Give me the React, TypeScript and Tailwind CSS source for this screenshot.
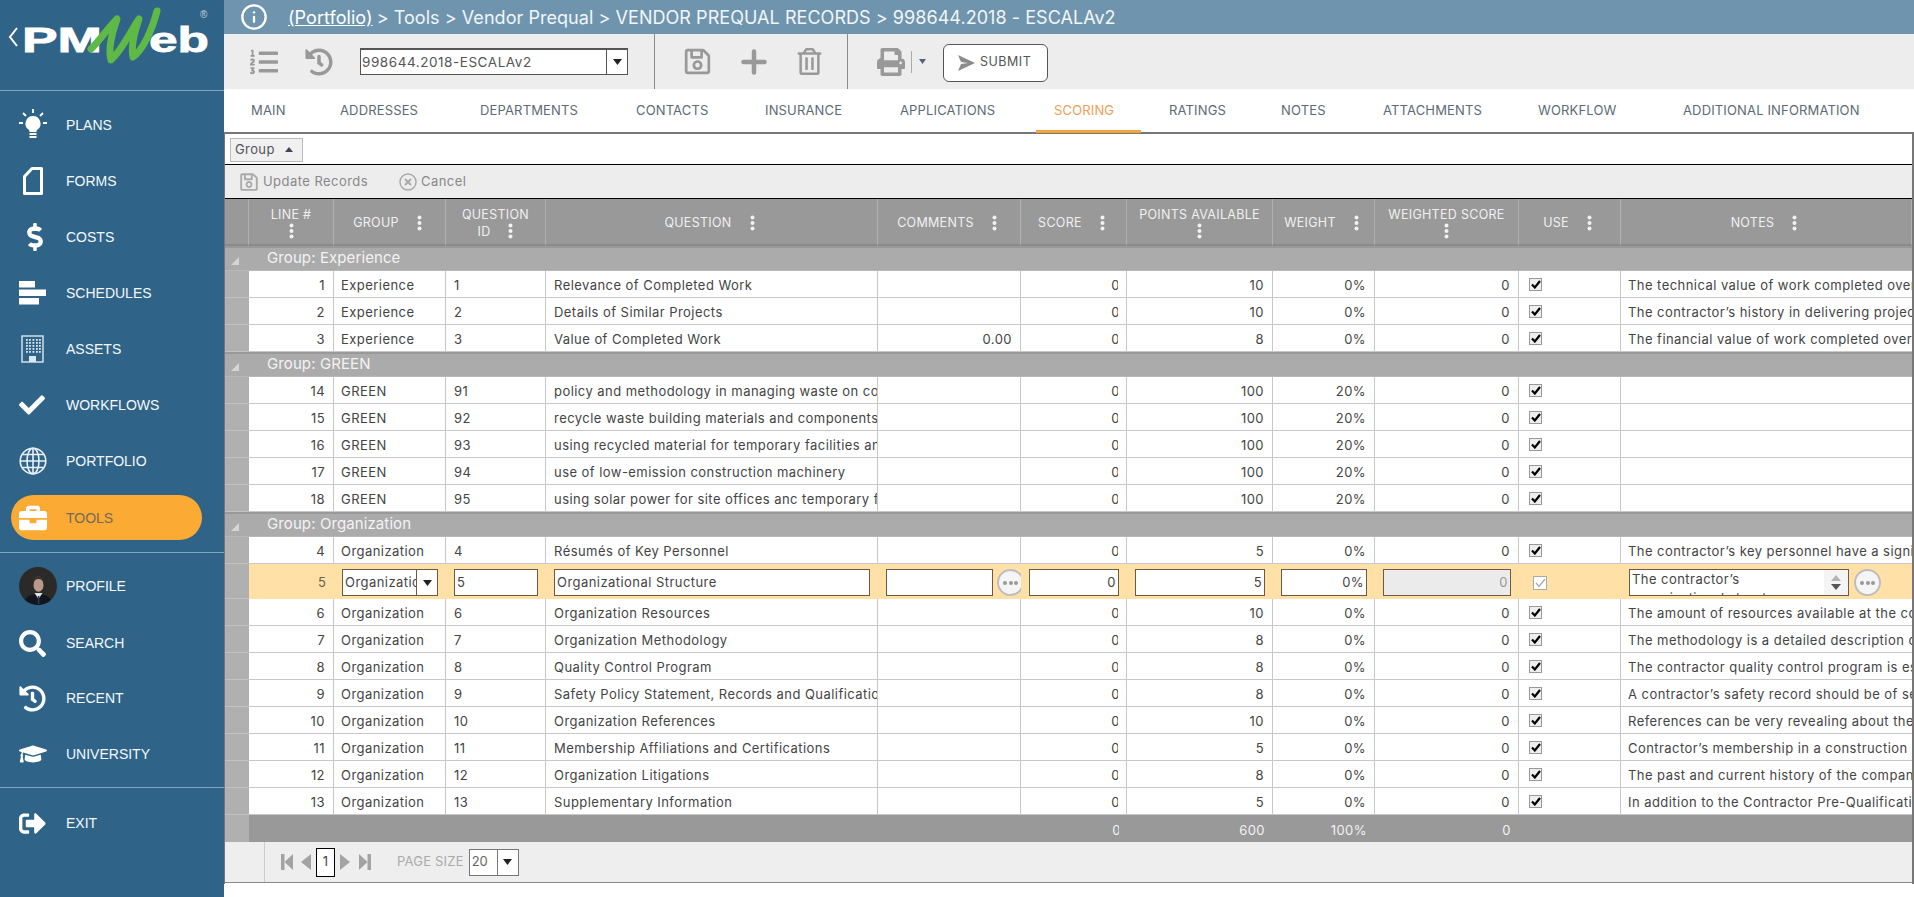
import React from "react";
import { Info, Plus } from "lucide-react";
import {
  FaBriefcase, FaCheck, FaDollarSign, FaGraduationCap, FaHistory, FaListOl, FaPrint,
  FaRegSave, FaRegTrashAlt, FaSearch, FaSignOutAlt,
} from "react-icons/fa";

const Kebab = ({ className = "" }: { className?: string }) => (
  <svg width="5" height="16" viewBox="0 0 5 16" className={className}>
    <circle cx="2.5" cy="2.5" r="2" fill="#f2f2f2" />
    <circle cx="2.5" cy="8" r="2" fill="#f2f2f2" />
    <circle cx="2.5" cy="13.5" r="2" fill="#f2f2f2" />
  </svg>
);

const Logo = () => (
  <svg width="224" height="90" viewBox="0 0 224 90">
    <path d="M17 28 L10 37 L17 46" fill="none" stroke="#fff" strokeWidth="2" />
    <text x="22" y="52" fontFamily="Liberation Sans" fontWeight="700" fontSize="35" fill="#fff" stroke="#fff" strokeWidth="0.8" textLength="80" lengthAdjust="spacingAndGlyphs">PM</text>
    <text x="149" y="52" fontFamily="Liberation Sans" fontWeight="700" fontSize="35" fill="#fff" stroke="#fff" strokeWidth="0.8" textLength="60" lengthAdjust="spacingAndGlyphs">eb</text>
    <path d="M91 49 C100 40 108 28 117 19 C111 36 108 50 111 60 C122 50 130 32 139 19 C134 33 131 47 133 57 C143 50 152 30 157 11" fill="none" stroke="#5fb946" strokeWidth="7" strokeLinecap="round" strokeLinejoin="round" />
    <text x="200" y="18" fontFamily="Liberation Sans" fontSize="10" fill="#c5d3dd">®</text>
  </svg>
);

const Bulb = () => (
  <svg width="28" height="32" viewBox="0 0 28 32" fill="#fff">
    <path d="M14 7a7.5 7.5 0 0 0-4.5 13.5c.8.7 1 1.500 1 2.500h7c0-1 .2-1.800 1-2.500A7.500 7.500 0 0 0 14 7z" />
    <rect x="10.500" y="24" width="7" height="2" />
    <rect x="10.500" y="27" width="7" height="2" />
    <path d="M14 0v4M4 4l3 3M24 4l-3 3M0 14h4M24 14h4" stroke="#fff" strokeWidth="1.800" />
  </svg>
);
const Forms = () => (
  <svg width="22" height="30" viewBox="0 0 22 30" fill="none" stroke="#fff" strokeWidth="3">
    <path d="M10 2.500H19.500V27.500H2.500V10.500Z" strokeLinejoin="round" />
  </svg>
);
const Sched = () => (
  <svg width="28" height="24" viewBox="0 0 28 24" fill="#fff">
    <rect x="0" y="0" width="16" height="6.500" />
    <rect x="0" y="8.500" width="27" height="6.500" />
    <rect x="0" y="17" width="20" height="6.500" />
  </svg>
);
const Building = () => (
  <svg width="23" height="28" viewBox="0 0 23 28">
    <rect x="1" y="1" width="21" height="26" fill="none" stroke="#cfe0ea" strokeWidth="1.500" />
    {[4, 7, 10, 13, 16].map((y) => [5, 8, 11.500, 15, 18].map((x) => <rect key={x + "-" + y} x={x} y={y} width="1.800" height="1.800" fill="#dbe7ef" />))}
    <rect x="8" y="21" width="7" height="6" fill="#dbe7ef" />
  </svg>
);
const Globe = () => (
  <svg width="28" height="28" viewBox="0 0 28 28" fill="none" stroke="#e8f0f5" strokeWidth="1.600">
    <circle cx="14" cy="14" r="12.800" />
    <ellipse cx="14" cy="14" rx="6" ry="12.800" />
    <path d="M14 1v26M1.200 14h25.600M3 7.500h22M3 20.500h22" />
  </svg>
);
const Avatar = () => (
  <svg width="38" height="38" viewBox="0 0 38 38">
    <defs><clipPath id="av"><circle cx="19" cy="19" r="19" /></clipPath></defs>
    <g clipPath="url(#av)">
      <rect width="38" height="38" fill="#2c2a28" />
      <path d="M4 38c1-8 8-11 15-11s14 3 15 11z" fill="#12151c" />
      <path d="M15.500 26l4 6 4-6z" fill="#dfe3e8" />
      <rect x="18.800" y="29" width="1.600" height="8" fill="#2b3560" />
      <ellipse cx="19.500" cy="18" rx="5" ry="6.800" fill="#b99a8a" />
      <path d="M14 16c0-5 2.500-7 5.500-7s5.500 2 5.500 7c-1-3-3-4-5.500-4s-4.500 1-5.500 4z" fill="#3a3431" />
    </g>
  </svg>
);

const NavItem = ({ icon, label, h }: { icon: React.ReactNode; label: string; h: string }) => (
  <div className={"flex items-center shrink-0 " + h}>
    <div className="w-[66px] flex justify-start pl-[19px] text-white shrink-0">{icon}</div>
    <span className="text-[14px] text-[#f4f8fb]">{label}</span>
  </div>
);

const Sidebar = () => (
  <aside className="w-[224px] shrink-0 h-full bg-[#2f6488] flex flex-col font-['Liberation_Sans',Arial,sans-serif]">
    <div className="h-[91px] border-b border-[#7ea6c2] shrink-0"><Logo /></div>
    <div className="h-[6px] shrink-0" />
    <NavItem h="h-[56px]" label="PLANS" icon={<Bulb />} />
    <NavItem h="h-[56px]" label="FORMS" icon={<div className="pl-[3px]"><Forms /></div>} />
    <NavItem h="h-[56px]" label="COSTS" icon={<div className="pl-[2px]"><FaDollarSign size={28} /></div>} />
    <NavItem h="h-[56px]" label="SCHEDULES" icon={<Sched />} />
    <NavItem h="h-[56px]" label="ASSETS" icon={<div className="pl-[2px]"><Building /></div>} />
    <NavItem h="h-[56px]" label="WORKFLOWS" icon={<FaCheck size={26} />} />
    <NavItem h="h-[56px]" label="PORTFOLIO" icon={<Globe />} />
    <div className="mt-[6px] ml-[11px] w-[191px] h-[45px] rounded-full bg-[#fbaa33] flex items-center shrink-0">
      <div className="w-[55px] pl-[8px] text-white"><FaBriefcase size={28} /></div>
      <span className="text-[14px] text-[#75695a] pt-[2px]">TOOLS</span>
    </div>
    <div className="mt-[12px] border-b border-[#7ea6c2] shrink-0" />
    <div className="h-[5px] shrink-0" />
    <div className="flex items-center h-[56px] shrink-0">
      <div className="w-[66px] pl-[19px] shrink-0"><Avatar /></div>
      <span className="text-[14px] text-[#f4f8fb]">PROFILE</span>
    </div>
    <NavItem h="h-[58px]" label="SEARCH" icon={<FaSearch size={27} />} />
    <NavItem h="h-[53px]" label="RECENT" icon={<FaHistory size={27} />} />
    <NavItem h="h-[58px]" label="UNIVERSITY" icon={<FaGraduationCap size={28} />} />
    <div className="mt-[4px] border-b border-[#7ea6c2] shrink-0" />
    <NavItem h="h-[71px]" label="EXIT" icon={<FaSignOutAlt size={27} />} />
  </aside>
);

const tabs: { label: string; box: string; active?: boolean }[] = [
  { label: "MAIN", box: "w-[116px] pl-[27px]" },
  { label: "ADDRESSES", box: "w-[140px]" },
  { label: "DEPARTMENTS", box: "w-[156px]" },
  { label: "CONTACTS", box: "w-[129px]" },
  { label: "INSURANCE", box: "w-[135px]" },
  { label: "APPLICATIONS", box: "w-[136px]" },
  { label: "SCORING", box: "w-[105px] pl-[18px]", active: true },
  { label: "RATINGS", box: "w-[140px] pl-[28px]" },
  { label: "NOTES", box: "w-[102px]" },
  { label: "ATTACHMENTS", box: "w-[155px]" },
  { label: "WORKFLOW", box: "w-[145px]" },
  { label: "ADDITIONAL INFORMATION", box: "w-[200px]" },
];

const Tabs = () => (
  <div className="h-[45px] shrink-0 flex bg-white border-b-2 border-[#777] text-[13px] tracking-[0.15px] text-[#5c6b76]">
    {tabs.map((t) => (
      <div key={t.label} className={"h-[44px] flex items-center whitespace-nowrap border-b-[3px] pt-[2px] " + t.box + (t.active ? " border-[#f0a63c] text-[#ee9f55]" : " border-transparent")}>{t.label}</div>
    ))}
  </div>
);

const Toolbar = () => (
  <div className="h-[55px] shrink-0 bg-[#ededed] flex items-center text-[#999]">
    <div className="w-[431px] h-full flex items-center border-r border-[#8a8a8a] shrink-0">
      <div className="ml-[26px] w-[55px]"><FaListOl size={28} /></div>
      <FaHistory size={28} />
      <div className="ml-[27px] w-[268px] h-[27px] flex bg-white border border-[#555] border-t-2 text-[13.500px] text-[#555]">
        <div className="flex-1 flex items-center pl-[1px] tracking-[0.55px]">998644.2018-ESCALAv2</div>
        <div className="w-[21px] border-l border-[#555] flex items-center justify-center">
          <svg width="9" height="6" viewBox="0 0 9 6"><path d="M0 0h9L4.500 6z" fill="#222" /></svg>
        </div>
      </div>
    </div>
    <div className="w-[193px] h-full flex items-center border-r border-[#8a8a8a] shrink-0">
      <div className="ml-[28px]"><FaRegSave size={29} /></div>
      <div className="ml-[24px]"><Plus size={36} strokeWidth={3} /></div>
      <div className="ml-[24px]"><FaRegTrashAlt size={27} /></div>
    </div>
    <div className="ml-[29px]"><FaPrint size={28} /></div>
    <div className="ml-[6px] h-[22px] border-l border-[#aaa]" />
    <svg className="ml-[7px]" width="7" height="5" viewBox="0 0 7 5"><path d="M0 0h7L3.500 5z" fill="#556080" /></svg>
    <div className="ml-[17px] mt-[2px] w-[105px] h-[38px] rounded-[6px] border border-[#555] bg-white flex items-center pl-[14px] text-[12.500px] tracking-[0.5px] text-[#555]">
      <svg width="17" height="16" viewBox="0 0 17 16" className="mr-[5px]"><path d="M0 0L17 8 0 16 3 9 10 8 3 7z" fill="#8c8c8c" /></svg>
      SUBMIT
    </div>
  </div>
);

type Row = { n: number; g: string; id: number; q: string; c?: string; p: number; w: string; note?: string };
const exp: Row[] = [
  { n: 1, g: "Experience", id: 1, q: "Relevance of Completed Work", p: 10, w: "0%", note: "The technical value of work completed over the last five years" },
  { n: 2, g: "Experience", id: 2, q: "Details of Similar Projects", p: 10, w: "0%", note: "The contractor’s history in delivering projects of similar size" },
  { n: 3, g: "Experience", id: 3, q: "Value of Completed Work", c: "0.00", p: 8, w: "0%", note: "The financial value of work completed over the last five years" },
];
const green: Row[] = [
  { n: 14, g: "GREEN", id: 91, q: "policy and methodology in managing waste on construction sites", p: 100, w: "20%" },
  { n: 15, g: "GREEN", id: 92, q: "recycle waste building materials and components on site", p: 100, w: "20%" },
  { n: 16, g: "GREEN", id: 93, q: "using recycled material for temporary facilities and works", p: 100, w: "20%" },
  { n: 17, g: "GREEN", id: 94, q: "use of low-emission construction machinery", p: 100, w: "20%" },
  { n: 18, g: "GREEN", id: 95, q: "using solar power for site offices anc temporary facilities", p: 100, w: "20%" },
];
const org1: Row = { n: 4, g: "Organization", id: 4, q: "Résumés of Key Personnel", p: 5, w: "0%", note: "The contractor’s key personnel have a significant role in the project" };
const org2: Row[] = [
  { n: 6, g: "Organization", id: 6, q: "Organization Resources", p: 10, w: "0%", note: "The amount of resources available at the contractor’s disposal" },
  { n: 7, g: "Organization", id: 7, q: "Organization Methodology", p: 8, w: "0%", note: "The methodology is a detailed description of the approach" },
  { n: 8, g: "Organization", id: 8, q: "Quality Control Program", p: 8, w: "0%", note: "The contractor quality control program is essential to the work" },
  { n: 9, g: "Organization", id: 9, q: "Safety Policy Statement, Records and Qualifications", p: 8, w: "0%", note: "A contractor’s safety record should be of serious consideration" },
  { n: 10, g: "Organization", id: 10, q: "Organization References", p: 10, w: "0%", note: "References can be very revealing about the contractor’s ability" },
  { n: 11, g: "Organization", id: 11, q: "Membership Affiliations and Certifications", p: 5, w: "0%", note: "Contractor’s membership in a construction association or body" },
  { n: 12, g: "Organization", id: 12, q: "Organization Litigations", p: 8, w: "0%", note: "The past and current history of the company litigation record" },
  { n: 13, g: "Organization", id: 13, q: "Supplementary Information", p: 5, w: "0%", note: "In addition to the Contractor Pre-Qualification questionnaire" },
];

const Check = () => (
  <div className="w-[13px] h-[13px] border border-[#999] bg-[#eee] flex items-center justify-center">
    <svg width="10" height="9" viewBox="0 0 10 9"><path d="M1 4.500L3.800 7.500 9 1" fill="none" stroke="#000" strokeWidth="2.200" /></svg>
  </div>
);

const Clip0 = () => (
  <div className="overflow-hidden text-right">
    <span className="inline-block -mr-[2px]">0</span>
  </div>
);

const cell = "border-r border-b border-[#c8c8c8] px-2 pt-[3px] whitespace-nowrap overflow-hidden";
const Gutter = () => <td className="bg-[#b0b0b0] border-b border-[#c2c2c2]" />;

const DataRow = ({ r }: { r: Row }) => (
  <tr className="h-[27px] text-[13px] tracking-[0.45px] text-[#444]">
    <Gutter />
    <td className={cell + " text-right"}>{r.n}</td>
    <td className={cell + " !pl-[7px]"}>{r.g}</td>
    <td className={cell}>{r.id}</td>
    <td className={cell}>{r.q}</td>
    <td className={cell + " text-right"}>{r.c}</td>
    <td className={cell}><Clip0 /></td>
    <td className={cell + " text-right"}>{r.p}</td>
    <td className={cell + " text-right"}>{r.w}</td>
    <td className={cell + " text-right"}>0</td>
    <td className={cell + " !pl-[10px] !pt-[0px]"}><Check /></td>
    <td className="border-b border-[#c8c8c8] pl-[7px] pr-2 pt-[3px] whitespace-nowrap overflow-hidden">{r.note}</td>
  </tr>
);

const GroupRow = ({ label }: { label: string }) => (
  <tr className="h-[25px] bg-[#ababab]">
    <td colSpan={12} className="border-t-2 border-[#999] border-b border-b-[#b8b8b8] p-0">
      <div className="flex items-center text-[15px] tracking-[0.1px] leading-[19px] text-[#f3f3f3] -mt-[3px]">
        <svg className="ml-[6px] mt-[7px]" width="8" height="8" viewBox="0 0 8 8"><path d="M8 0V8H0z" fill="#d5d5d5" /></svg>
        <span className="ml-[28px]">{label}</span>
      </div>
    </td>
  </tr>
);

const inputBox = "h-[27px] border border-[#6e5a41] bg-white flex items-center text-[13px] tracking-[0.45px] text-[#444]";
const Dots = () => (
  <div className="w-[27px] h-[27px] rounded-full border-2 border-[#bdbdbd] bg-[#f5f5f5] flex items-center justify-center gap-[1.500px] shrink-0">
    <span className="w-[4px] h-[4px] rounded-full bg-[#999]" />
    <span className="w-[4px] h-[4px] rounded-full bg-[#999]" />
    <span className="w-[4px] h-[4px] rounded-full bg-[#999]" />
  </div>
);

const EditRow = () => {
  const c = "px-2 pt-[3px] border-b border-[#ffe0a6]";
  return (
    <tr className="h-[35px] bg-[#ffe0a6] text-[13px] text-[#444]">
      <td className="bg-[#b0b0b0] border-b border-[#c2c2c2]" />
      <td className={c + " text-right text-[#6b6252]"}>5</td>
      <td className={c}>
        <div className={inputBox + " overflow-hidden"}>
          <span className="flex-1 pl-[2px] overflow-hidden whitespace-nowrap">Organization</span>
          <div className="w-[21px] h-full border-l border-[#6e5a41] flex items-center justify-center shrink-0">
            <svg width="9" height="6" viewBox="0 0 9 6"><path d="M0 0h9L4.500 6z" fill="#222" /></svg>
          </div>
        </div>
      </td>
      <td className={c}><div className={inputBox + " pl-[2px]"}>5</div></td>
      <td className={c}><div className={inputBox + " pl-[2px]"}>Organizational Structure</div></td>
      <td className={c + " !pr-0 overflow-hidden"}>
        <div className="flex items-center gap-[4px]"><div className={inputBox + " w-[107px] shrink-0"} /><Dots /></div>
      </td>
      <td className={c}><div className={inputBox + " justify-end pr-[2px]"}>0</div></td>
      <td className={c}><div className={inputBox + " justify-end pr-[2px]"}>5</div></td>
      <td className={c}><div className={inputBox + " justify-end pr-[2px]"}>0%</div></td>
      <td className={c}><div className={inputBox + " justify-end pr-[2px] !bg-[#ebebeb] !text-[#999]"}>0</div></td>
      <td className="pl-[14px] pt-[3px] border-b border-[#ffe0a6]">
        <div className="w-[14px] h-[14px] border border-[#aaa] bg-white flex items-center justify-center">
          <svg width="11" height="10" viewBox="0 0 11 10"><path d="M1 5L4 8.500 10 1" fill="none" stroke="#a9a9a9" strokeWidth="1.300" /></svg>
        </div>
      </td>
      <td className="pl-2 pr-0 pt-[3px] border-b border-[#ffe0a6] overflow-hidden">
        <div className="flex items-center gap-[5px]">
          <div className="w-[220px] h-[27px] border border-[#6e5a41] bg-white flex overflow-hidden shrink-0">
            <div className="flex-1 pl-[2px] leading-[19px] tracking-[0.45px] text-[13px] h-[25px] overflow-hidden">The contractor’s<br />organizational structure</div>
            <div className="w-[24px] flex flex-col items-center justify-center gap-[3px] bg-[#f4f4f4]">
              <svg width="10" height="6" viewBox="0 0 10 6"><path d="M5 0L10 6H0z" fill="#b5b5b5" /></svg>
              <svg width="10" height="6" viewBox="0 0 10 6"><path d="M0 0h10L5 6z" fill="#555" /></svg>
            </div>
          </div>
          <Dots />
        </div>
      </td>
    </tr>
  );
};

const Head = ({ a, b, dotsOn }: { a: string; b?: string; dotsOn?: "a" | "own" }) => (
  <th className="border-r border-[#b0b0b0] border-b-2 border-b-[#8a8a8a] font-normal p-0 pt-[2px] text-[12.500px] text-[#f0f0f0] tracking-[0.3px]">
    <div className={"flex flex-col items-center leading-[17px] " + (dotsOn === "a" ? "pr-[4px]" : "")}>
      <div className="flex items-center gap-[18px] whitespace-nowrap">
        <span>{a}</span>{dotsOn === "a" && <Kebab />}
      </div>
      {dotsOn === "own" && <Kebab />}
      {b && <div className="flex items-center gap-[18px]"><span>{b}</span><Kebab /></div>}
    </div>
  </th>
);

const Grid = () => (
  <table className="w-[1687px] table-fixed border-separate border-spacing-0">
    <colgroup>
      <col className="w-[24px]" /><col className="w-[85px]" /><col className="w-[112px]" /><col className="w-[100px]" />
      <col className="w-[332px]" /><col className="w-[143px]" /><col className="w-[106px]" /><col className="w-[146px]" />
      <col className="w-[102px]" /><col className="w-[144px]" /><col className="w-[102px]" /><col className="w-[291px]" />
    </colgroup>
    <thead>
      <tr className="h-[47px] bg-[#999]">
        <th className="border-r border-[#b0b0b0] border-b-2 border-b-[#8a8a8a]" />
        <Head a="LINE #" dotsOn="own" />
        <Head a="GROUP" dotsOn="a" />
        <Head a="QUESTION" b="ID" />
        <Head a="QUESTION" dotsOn="a" />
        <Head a="COMMENTS" dotsOn="a" />
        <Head a="SCORE" dotsOn="a" />
        <Head a="POINTS AVAILABLE" dotsOn="own" />
        <Head a="WEIGHT" dotsOn="a" />
        <Head a="WEIGHTED SCORE" dotsOn="own" />
        <Head a="USE" dotsOn="a" />
        <Head a="NOTES" dotsOn="a" />
      </tr>
    </thead>
    <tbody>
      <GroupRow label="Group: Experience" />
      {exp.map((r) => <DataRow key={r.n} r={r} />)}
      <GroupRow label="Group: GREEN" />
      {green.map((r) => <DataRow key={r.n} r={r} />)}
      <GroupRow label="Group: Organization" />
      <DataRow r={org1} />
      <EditRow />
      {org2.map((r) => <DataRow key={r.n} r={r} />)}
      <tr className="h-[27px] bg-[#999] text-[13px] tracking-[0.45px] text-[#f2f2f2]">
        <td className="bg-[#b0b0b0]" />
        <td /><td /><td /><td /><td />
        <td className="px-2 pt-[5px]"><Clip0 /></td>
        <td className="px-2 pt-[5px] text-right">600</td>
        <td className="px-2 pt-[5px] text-right">100%</td>
        <td className="px-2 pt-[5px] text-right">0</td>
        <td /><td />
      </tr>
    </tbody>
  </table>
);

const Pager = () => (
  <div className="h-[41px] shrink-0 bg-[#eee] border-b border-[#888] flex items-center text-[#aaa] text-[13px]">
    <div className="w-[40px] h-full border-r border-[#ccc] shrink-0" />
    <svg className="ml-[16px]" width="12" height="16" viewBox="0 0 12 16" fill="#a3a3a3"><rect width="3.500" height="16" /><path d="M12 0V16L3.500 8z" /></svg>
    <svg className="ml-[8px]" width="10" height="16" viewBox="0 0 10 16" fill="#a3a3a3"><path d="M10 0V16L0 8z" /></svg>
    <div className="ml-[5px] w-[19px] h-[29px] border border-black bg-white flex items-center justify-center text-[#444]">1</div>
    <svg className="ml-[5px]" width="10" height="16" viewBox="0 0 10 16" fill="#a3a3a3"><path d="M0 0V16L10 8z" /></svg>
    <svg className="ml-[9px]" width="12" height="16" viewBox="0 0 12 16" fill="#a3a3a3"><path d="M0 0V16L8.500 8z" /><rect x="8.500" width="3.500" height="16" /></svg>
    <span className="ml-[26px] tracking-[0.2px] whitespace-nowrap">PAGE SIZE</span>
    <div className="ml-[5px] w-[50px] h-[27px] bg-white border border-[#777] flex items-center text-[#666]">
      <span className="flex-1 pl-[2px]">20</span>
      <div className="w-[21px] h-full border-l border-[#777] flex items-center justify-center">
        <svg width="9" height="6" viewBox="0 0 9 6"><path d="M0 0h9L4.500 6z" fill="#222" /></svg>
      </div>
    </div>
  </div>
);

export default function App() {
  return (
    <div className="w-[1914px] h-[897px] overflow-hidden flex bg-white font-['Inter',sans-serif]">
      <Sidebar />
      <main className="w-[1690px] flex flex-col">
        <div className="h-[34px] shrink-0 bg-[#6f95ae] flex items-center text-white text-[18px]">
          <div className="ml-[16px] w-[48px]"><Info size={28} strokeWidth={2} /></div>
          <span className="underline pt-[1px] tracking-[0.05px]">(Portfolio)</span>
          <span className="ml-[4px] pt-[1px] text-[#f2f5f7] tracking-[0.05px]">&gt; Tools &gt; Vendor Prequal &gt; VENDOR PREQUAL RECORDS &gt; 998644.2018 - ESCALAv2</span>
        </div>
        <Toolbar />
        <Tabs />
        <div className="h-[750px] shrink-0 flex flex-col border-l border-r-2 border-l-[#777] border-r-[#777]">
          <div className="h-[31px] shrink-0 border-b border-black flex items-center pl-[5px]">
            <div className="w-[73px] h-[24px] mt-[1px] bg-[#f0f0f0] border border-[#bbb] flex items-center pl-[4px] text-[13px] tracking-[0.4px] text-[#555]">
              Group
              <svg className="ml-[10px]" width="8" height="5" viewBox="0 0 8 5"><path d="M4 0L8 5H0z" fill="#445" /></svg>
            </div>
          </div>
          <div className="h-[34px] shrink-0 bg-[#ededed] border-b border-black flex items-center text-[13px] tracking-[0.45px] text-[#888]">
            <div className="ml-[14px] mr-[4px] text-[#aaa]"><FaRegSave size={20} /></div>
            <span>Update Records</span>
            <svg className="ml-[31px] mr-[4px]" width="18" height="18" viewBox="0 0 18 18" fill="none" stroke="#aaa" strokeWidth="1.500"><circle cx="9" cy="9" r="8" /><path d="M6 6l6 6M12 6l-6 6" strokeWidth="2" /></svg>
            <span>Cancel</span>
          </div>
          <Grid />
          <Pager />
        </div>
      </main>
    </div>
  );
}
